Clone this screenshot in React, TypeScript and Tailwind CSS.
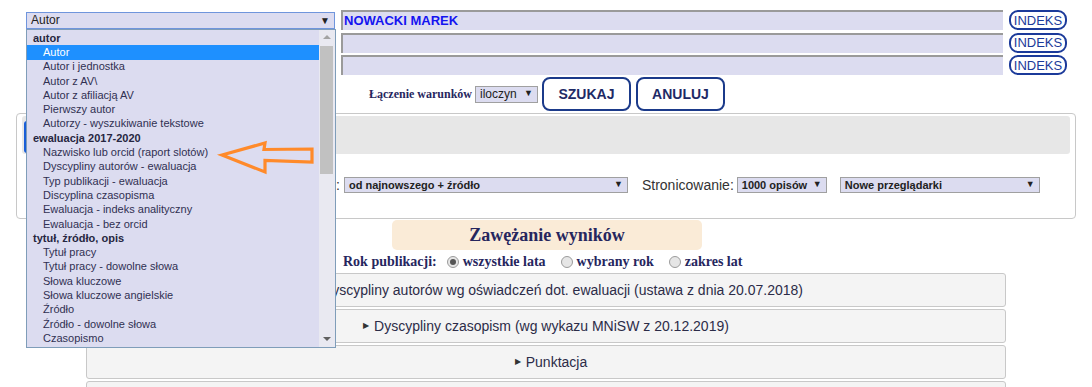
import React from "react";

const sans = { fontFamily: '"Liberation Sans", Arial, sans-serif' };
const serif = { fontFamily: '"Liberation Serif", "Times New Roman", serif' };

type Opt = { t: string; g?: boolean; sel?: boolean };
const options: Opt[] = [
  { t: "autor", g: true },
  { t: "Autor", sel: true },
  { t: "Autor i jednostka" },
  { t: "Autor z AV\\" },
  { t: "Autor z afiliacją AV" },
  { t: "Pierwszy autor" },
  { t: "Autorzy - wyszukiwanie tekstowe" },
  { t: "ewaluacja 2017-2020", g: true },
  { t: "Nazwisko lub orcid (raport slotów)" },
  { t: "Dyscypliny autorów - ewaluacja" },
  { t: "Typ publikacji - ewaluacja" },
  { t: "Discyplina czasopisma" },
  { t: "Ewaluacja - indeks analityczny" },
  { t: "Ewaluacja - bez orcid" },
  { t: "tytuł, źródło, opis", g: true },
  { t: "Tytuł pracy" },
  { t: "Tytuł pracy - dowolne słowa" },
  { t: "Słowa kluczowe" },
  { t: "Słowa kluczowe angielskie" },
  { t: "Źródło" },
  { t: "Źródło - dowolne słowa" },
  { t: "Czasopismo" },
];

function Indeks() {
  return (
    <div className="ml-[6px] flex h-[20px] w-[58px] items-center justify-center rounded-[9px] border-2 border-[#1b3a9a] bg-white text-[13px] leading-none text-[#1b3a9a]">
      INDEKS
    </div>
  );
}

function InputRow({ value, first }: { value?: string; first?: boolean }) {
  return (
    <div className="flex h-[20px] items-center">
      <div className="ml-[26px] w-[309px]">
        {first && (
          <div className="flex h-[17px] items-center justify-between border border-[#6f95dc] bg-[#dcdcf0] px-[4px] text-[12px] text-[#222]">
            <span>Autor</span>
            <span className="text-[10px] text-[#222]">▼</span>
          </div>
        )}
      </div>
      <div className="ml-[6px] flex h-[20px] w-[662px] items-center border-l-2 border-t-2 border-[#9a9a9a] bg-[#dcdcf0] pl-[1px] text-[13px] font-bold text-[#1414f0]">
        {value}
      </div>
      <Indeks />
    </div>
  );
}

function Radio({ checked, label, first }: { checked?: boolean; label: string; first?: boolean }) {
  return (
    <span className={"inline-flex items-center " + (first ? "ml-[10px]" : "ml-[15px]")}>
      <span className="mr-[4px] flex h-[12px] w-[12px] items-center justify-center rounded-full border border-[#9b9b9b] bg-[#e6e6e6]">
        {checked && <span className="h-[6px] w-[6px] rounded-full bg-[#555]" />}
      </span>
      <span>{label}</span>
    </span>
  );
}

function Acc({ text, pad }: { text?: string; pad: string }) {
  return (
    <div
      className={
        "flex h-[34px] w-[920px] items-center justify-center rounded-[3px] border border-[#c8c8c8] bg-[#f4f4f4] text-[14px] text-[#2c2c48] " +
        pad
      }
    >
      {text && <span className="mr-[5px] text-[8px] text-[#333]">▶</span>}
      {text}
    </div>
  );
}

export default function App() {
  return (
    <div className="relative h-[387px] w-[1092px] overflow-hidden bg-white" style={sans}>
      <div className="pt-[10px]">
        <div className="flex flex-col gap-[2.5px]">
          <InputRow value="NOWACKI MAREK" first />
          <InputRow />
          <InputRow />
        </div>

        <div className="mt-[2px] flex h-[34px] items-center">
          <span className="ml-[369px] text-[12px] font-bold text-[#26265e]" style={serif}>
            Łączenie warunków
          </span>
          <div className="ml-[3px] flex h-[17px] w-[63px] items-center justify-between border border-[#a0a0a0] bg-[#dcdcf0] px-[4px] text-[12px] text-[#222]">
            <span>iloczyn</span>
            <span className="text-[9px]">▼</span>
          </div>
          <div className="ml-[4px] flex h-[34px] w-[89px] items-center justify-center rounded-[8px] border-2 border-[#1b3a8a] bg-white text-[14px] font-bold text-[#1e2a66]">
            SZUKAJ
          </div>
          <div className="ml-[5px] flex h-[34px] w-[89px] items-center justify-center rounded-[8px] border-2 border-[#1b3a8a] bg-white text-[14px] font-bold text-[#1e2a66]">
            ANULUJ
          </div>
        </div>

        <div className="ml-[16px] mt-[2px] flex h-[106px] w-[1060px] flex-col rounded-[4px] border border-[#c8c8c8]">
          <div className="mx-[5px] mt-[2px] flex h-[38px] rounded-[3px] bg-[#e7e7e7]">
            <div className="ml-[2px] mt-[5px] h-[32px] w-[60px] rounded-l-[3px] border-l-[3px] border-[#1a5fd8] bg-white" />
          </div>
          <div className="mt-[23px] flex h-[16px] items-center text-[14px] text-[#333]">
            <span className="ml-[249px]">Sortowanie:</span>
            <div className="ml-[4px] flex h-[16px] w-[284px] items-center justify-between border border-[#a0a0a0] bg-[#dcdcf0] px-[4px] text-[11px] font-bold text-[#222]">
              <span>od najnowszego + źródło</span>
              <span className="text-[9px] font-normal">▼</span>
            </div>
            <span className="ml-[14px]">Stronicowanie:</span>
            <div className="ml-[3px] flex h-[16px] w-[90px] items-center justify-between border border-[#a0a0a0] bg-[#dcdcf0] px-[4px] text-[11px] font-bold text-[#222]">
              <span>1000 opisów</span>
              <span className="text-[9px] font-normal">▼</span>
            </div>
            <div className="ml-[13px] flex h-[16px] w-[200px] items-center justify-between border border-[#a0a0a0] bg-[#dcdcf0] px-[4px] text-[11px] font-bold text-[#222]">
              <span>Nowe przeglądarki</span>
              <span className="text-[9px] font-normal">▼</span>
            </div>
          </div>
        </div>

        <div className="ml-[392px] mt-[1px] flex h-[30px] w-[310px] items-center justify-center rounded-[5px] bg-[#faebd7] text-[18px] font-bold text-[#26265e]" style={serif}>
          Zawężanie wyników
        </div>
        <div className="mt-[3px] flex h-[17px] items-center text-[14px] font-bold text-[#26265e]" style={serif}>
          <span className="ml-[343px]">Rok publikacji:</span>
          <Radio checked first label="wszystkie lata" />
          <Radio label="wybrany rok" />
          <Radio label="zakres lat" />
        </div>

        <div className="ml-[86px] mt-[3px] flex flex-col gap-[2px]">
          <Acc pad="pl-[22px]" text="Dyscypliny autorów wg oświadczeń dot. ewaluacji (ustawa z dnia 20.07.2018)" />
          <Acc pad="pl-0" text="Dyscypliny czasopism (wg wykazu MNiSW z 20.12.2019)" />
          <Acc pad="pl-[10px]" text="Punktacja" />
          <Acc pad="pl-0" />
        </div>
      </div>

      {/* opened select list */}
      <div className="absolute left-[26px] top-[29px] flex h-[319px] w-[310px] border border-[#7f9db9] bg-[#dcdcf0]">
        <div className="flex-1 pt-[1px]">
          {options.map((o, i) => (
            <div
              key={i}
              className={
                "flex h-[14.3px] items-center text-[11px] leading-none " +
                (o.g
                  ? "pl-[6px] font-bold text-[#262640]"
                  : o.sel
                  ? "bg-[#1e90ff] pl-[16px] text-white"
                  : "pl-[16px] text-[#303052]")
              }
            >
              {o.t}
            </div>
          ))}
        </div>
        <div className="relative w-[16px] bg-[#e9e9f1]">
          <div className="absolute left-[4px] top-[5px] h-0 w-0 border-x-[4px] border-b-[4px] border-x-transparent border-b-[#a3a3a3]" />
          <div className="absolute left-[1px] top-[16px] h-[128px] w-[13px] bg-[#c1c1c1]" />
          <div className="absolute bottom-[6px] left-[4px] h-0 w-0 border-x-[4px] border-t-[4px] border-x-transparent border-t-[#606060]" />
        </div>
      </div>

      {/* orange arrow */}
      <svg className="absolute left-0 top-0" width="1092" height="387" viewBox="0 0 1092 387">
        <polygon
          points="222,155 265,143 264,149.5 312,149 312,162 265,160.5 265,172"
          fill="none"
          stroke="#ff8a2a"
          strokeWidth="3.2"
          strokeLinejoin="miter"
        />
      </svg>
    </div>
  );
}
